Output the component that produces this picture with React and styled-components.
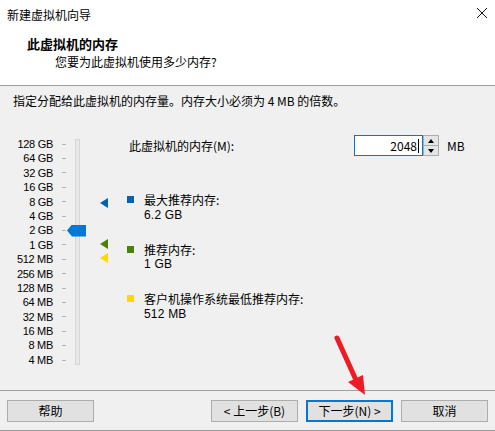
import React from 'react';
import styled, { createGlobalStyle } from 'styled-components';

const GlobalStyle = createGlobalStyle`
  html, body {
    margin: 0;
    padding: 0;
    background: #f0f0f0;
  }
  body {
    font-family: "Noto Sans CJK SC", "Noto Sans", sans-serif;
    font-size: 12px;
    color: #000;
  }
`;

const ROW = 14.4;
const TRACK_TOP = 2; // track starts 2px below the first scale row

const scale = [
  '128 GB', '64 GB', '32 GB', '16 GB', '8 GB', '4 GB', '2 GB', '1 GB',
  '512 MB', '256 MB', '128 MB', '64 MB', '32 MB', '16 MB', '8 MB', '4 MB',
];

const markers = [
  { color: '#0063b1', at: 4.1, title: '最大推荐内存:', value: '6.2 GB' },
  { color: '#498205', at: 6.95, title: '推荐内存:', value: '1 GB' },
  { color: '#ffd800', at: 7.93, title: '客户机操作系统最低推荐内存:', value: '512 MB' },
];

const thumbAt = 6;

const Window = styled.div`
  position: relative;
  width: 495px;
  height: 431px;
  display: flex;
  flex-direction: column;
  background: #f0f0f0;
  overflow: hidden;
`;

const Header = styled.header`
  height: 86px;
  box-sizing: border-box;
  background: #fff;
  border-bottom: 1px solid #a0a0a0;
`;

const TitleBar = styled.div`
  height: 28px;
  display: flex;
  align-items: center;
  justify-content: space-between;
  padding: 0 7px 0 7px;
  box-sizing: border-box;
`;

const CloseButton = styled.span`
  display: flex;
  width: 12px;
  height: 12px;
  margin-bottom: 2px;
`;

const HeaderTitle = styled.div`
  margin-top: 7px;
  padding-left: 27px;
  font-size: 13px;
  font-weight: bold;
  line-height: 18px;
`;

const HeaderSub = styled.div`
  padding-left: 55px;
  line-height: 18px;
`;

const Body = styled.main`
  flex: 1;
  padding-top: 6px;
`;

const Description = styled.div`
  padding-left: 13px;
  line-height: 18px;
`;

const Main = styled.div`
  display: flex;
  align-items: flex-start;
  margin-top: 25px;
`;

const Scale = styled.div`
  display: flex;
  flex-direction: column;
  margin-top: 2px;
`;

const ScaleRow = styled.div`
  height: ${ROW}px;
  display: flex;
  align-items: center;
`;

const ScaleLabel = styled.span`
  width: 53px;
  text-align: right;
  font-family: "Liberation Sans", Arial, sans-serif;
  font-size: 11px;
  line-height: ${ROW}px;
  white-space: nowrap;
  letter-spacing: -0.3px;
`;

const Tick = styled.span`
  width: 4px;
  height: 1px;
  margin-left: 9px;
  background: #b8b8b8;
`;

const TrackWrap = styled.div`
  position: relative;
  margin-left: 9px;
  margin-top: ${2 + TRACK_TOP}px;
  width: 5px;
  height: 226px;
  box-sizing: border-box;
  border: 1px solid #d6d6d6;
  background: #e7e7e7;
`;

const Thumb = styled.div`
  position: absolute;
  left: -9px;
  width: 19px;
  height: 12px;
  background: #0078d7;
  clip-path: polygon(0 50%, 5px 0, 100% 0, 100% 100%, 5px 100%);
`;

const MarkerColumn = styled.div`
  position: relative;
  margin-left: 20px;
  margin-top: ${2 + TRACK_TOP}px;
  width: 8px;
  height: 226px;
`;

const Marker = styled.span`
  position: absolute;
  left: 0;
  width: 0;
  height: 0;
  border-top: 5.5px solid transparent;
  border-bottom: 5.5px solid transparent;
  border-right: 8px solid ${p => p.$color};
`;

const Content = styled.div`
  display: flex;
  flex-direction: column;
  margin-left: 19px;
`;

const MemoryRow = styled.div`
  display: flex;
  align-items: center;
  height: 21px;
`;

const MemoryLabel = styled.span`
  width: 225px;
  padding-left: 2px;
  line-height: 18px;
`;

const Spin = styled.div`
  display: flex;
  height: 21px;
`;

const NumberBox = styled.div`
  width: 69px;
  height: 21px;
  box-sizing: border-box;
  border: 1px solid #0078d7;
  background: #fff;
  display: flex;
  align-items: center;
  justify-content: flex-end;
  padding-right: 3px;
  line-height: 18px;
`;

const Caret = styled.span`
  width: 1px;
  height: 14px;
  background: #000;
  margin-left: 1px;
`;

const SpinButtons = styled.div`
  display: flex;
  flex-direction: column;
  width: 16px;
  height: 21px;
  box-sizing: border-box;
  border: 1px solid #adadad;
  border-left: none;
  background: #adadad;
  gap: 1px;
`;

const SpinButton = styled.span`
  flex: 1;
  display: flex;
  align-items: center;
  justify-content: center;
  background: #e5e5e5;
  border-left: 1px solid #adadad;
`;

const Arrow = styled.span`
  width: 0;
  height: 0;
  border-left: 3.5px solid transparent;
  border-right: 3.5px solid transparent;
  ${p => (p.$down ? 'border-top: 4px solid #000;' : 'border-bottom: 4px solid #000;')}
`;

const Unit = styled.span`
  margin-left: 8px;
  line-height: 18px;
`;

const Legend = styled.div`
  display: flex;
  flex-direction: column;
  gap: 19px;
  margin-top: 35px;
`;

const LegendItem = styled.div`
  display: flex;
  align-items: flex-start;
`;

const Swatch = styled.span`
  width: 7px;
  height: 7px;
  margin-top: 5px;
  background: ${p => p.$color};
`;

const LegendText = styled.div`
  margin-left: 10px;
  display: flex;
  flex-direction: column;
`;

const LegendTitle = styled.span`
  line-height: 17.5px;
`;

const LegendValue = styled.span`
  font-family: "Liberation Sans", Arial, sans-serif;
  font-size: 12px;
  line-height: 13px;
  letter-spacing: 0.2px;
`;

const Footer = styled.footer`
  height: 41px;
  box-sizing: border-box;
  border-top: 1px solid #a0a0a0;
  border-bottom: 1px solid #9a9a9a;
  display: flex;
  align-items: flex-start;
  padding: 9px 7px 0 7px;
  gap: 8px;
`;

const Button = styled.button`
  width: 87px;
  height: 22px;
  box-sizing: border-box;
  padding: 0;
  border: ${p => (p.$primary ? '2px solid #0078d7' : '1px solid #adadad')};
  background: #e1e1e1;
  font-family: inherit;
  font-size: 12px;
  color: #000;
  line-height: 18px;
  margin-left: ${p => (p.$push ? 'auto' : '0')};
`;

const Annotation = styled.svg`
  position: absolute;
  left: 0;
  top: 0;
  pointer-events: none;
`;

export default function App() {
  return (
    <>
      <GlobalStyle />
      <Window>
        <Header>
          <TitleBar>
            <span>新建虚拟机向导</span>
            <CloseButton>
              <svg width="12" height="12" viewBox="0 0 12 12">
                <path d="M1 1L11 11M11 1L1 11" stroke="#111" strokeWidth="1" />
              </svg>
            </CloseButton>
          </TitleBar>
          <HeaderTitle>此虚拟机的内存</HeaderTitle>
          <HeaderSub>您要为此虚拟机使用多少内存?</HeaderSub>
        </Header>

        <Body>
          <Description>指定分配给此虚拟机的内存量。内存大小必须为 4 MB 的倍数。</Description>
          <Main>
            <Scale>
              {scale.map(label => (
                <ScaleRow key={label}>
                  <ScaleLabel>{label}</ScaleLabel>
                  <Tick />
                </ScaleRow>
              ))}
            </Scale>
            <TrackWrap>
              <Thumb style={{ top: thumbAt * ROW + ROW / 2 - TRACK_TOP - 7 }} />
            </TrackWrap>
            <MarkerColumn>
              {markers.map(m => (
                <Marker
                  key={m.color}
                  $color={m.color}
                  style={{ top: m.at * ROW + ROW / 2 - TRACK_TOP - 5.5 }}
                />
              ))}
            </MarkerColumn>
            <Content>
              <MemoryRow>
                <MemoryLabel>此虚拟机的内存(M):</MemoryLabel>
                <Spin>
                  <NumberBox>
                    2048<Caret />
                  </NumberBox>
                  <SpinButtons>
                    <SpinButton><Arrow /></SpinButton>
                    <SpinButton><Arrow $down /></SpinButton>
                  </SpinButtons>
                </Spin>
                <Unit>MB</Unit>
              </MemoryRow>
              <Legend>
                {markers.map(m => (
                  <LegendItem key={m.color}>
                    <Swatch $color={m.color} />
                    <LegendText>
                      <LegendTitle>{m.title}</LegendTitle>
                      <LegendValue>{m.value}</LegendValue>
                    </LegendText>
                  </LegendItem>
                ))}
              </Legend>
            </Content>
          </Main>
        </Body>

        <Footer>
          <Button>帮助</Button>
          <Button $push>&lt; 上一步(B)</Button>
          <Button $primary>下一步(N) &gt;</Button>
          <Button>取消</Button>
        </Footer>

        <Annotation width="495" height="431">
          <line x1="337" y1="338" x2="356" y2="380" stroke="#ed1c24" strokeWidth="5" strokeLinecap="round" />
          <polygon points="365,395 348,382 363,375" fill="#ed1c24" />
        </Annotation>
      </Window>
    </>
  );
}
